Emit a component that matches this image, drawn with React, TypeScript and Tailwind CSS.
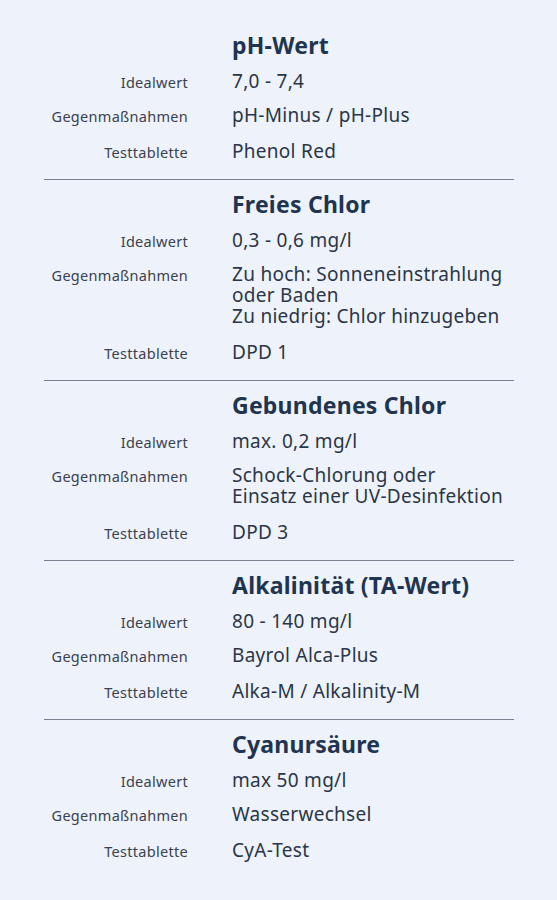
const sections = [
  {
    title: 'pH-Wert',
    rows: [
      ['Idealwert', ['7,0 - 7,4']],
      ['Gegenmaßnahmen', ['pH-Minus / pH-Plus']],
      ['Testtablette', ['Phenol Red']],
    ],
  },
  {
    title: 'Freies Chlor',
    rows: [
      ['Idealwert', ['0,3 - 0,6 mg/l']],
      ['Gegenmaßnahmen', ['Zu hoch: Sonneneinstrahlung', 'oder Baden', 'Zu niedrig: Chlor hinzugeben']],
      ['Testtablette', ['DPD 1']],
    ],
  },
  {
    title: 'Gebundenes Chlor',
    rows: [
      ['Idealwert', ['max. 0,2 mg/l']],
      ['Gegenmaßnahmen', ['Schock-Chlorung oder', 'Einsatz einer UV-Desinfektion']],
      ['Testtablette', ['DPD 3']],
    ],
  },
  {
    title: 'Alkalinität (TA-Wert)',
    rows: [
      ['Idealwert', ['80 - 140 mg/l']],
      ['Gegenmaßnahmen', ['Bayrol Alca-Plus']],
      ['Testtablette', ['Alka-M / Alkalinity-M']],
    ],
  },
  {
    title: 'Cyanursäure',
    rows: [
      ['Idealwert', ['max 50 mg/l']],
      ['Gegenmaßnahmen', ['Wasserwechsel']],
      ['Testtablette', ['CyA-Test']],
    ],
  },
] as const;

export default function App() {
  return (
    <div className="min-h-[900px] w-full bg-[#eef2fa] pt-[21px] font-['Noto_Sans',sans-serif]">
      <div className="mx-[44px] w-[470px]">
        {sections.map((s, i) => (
          <div key={s.title} className={i < sections.length - 1 ? 'border-b border-[#7a8190] pt-[10px] pb-[17px]' : 'pt-[10px]'}>
            <div className="grid grid-cols-[144px_1fr] gap-x-[44px]">
              <div />
              <h2 className="whitespace-nowrap text-[23px] font-bold leading-[28px] tracking-[0.01em] text-[#1f3450]">{s.title}</h2>
            </div>
            <div className="mt-[12px] flex flex-col gap-[13px]">
              {s.rows.map(([label, lines], j) => (
                <div key={label} className={`grid grid-cols-[144px_1fr] items-start gap-x-[44px] ${j === 2 ? 'mt-[2px]' : ''}`}>
                  <div className="whitespace-nowrap pt-[2px] text-right text-[14.5px] leading-[19px] tracking-[0.02em] text-[#3a4150]">{label}</div>
                  <div className="text-[19px] leading-[21px] tracking-[0.015em] text-[#2a3648]">
                    {lines.map((l) => (
                      <div key={l} className="whitespace-nowrap">{l}</div>
                    ))}
                  </div>
                </div>
              ))}
            </div>
          </div>
        ))}
      </div>
    </div>
  );
}
